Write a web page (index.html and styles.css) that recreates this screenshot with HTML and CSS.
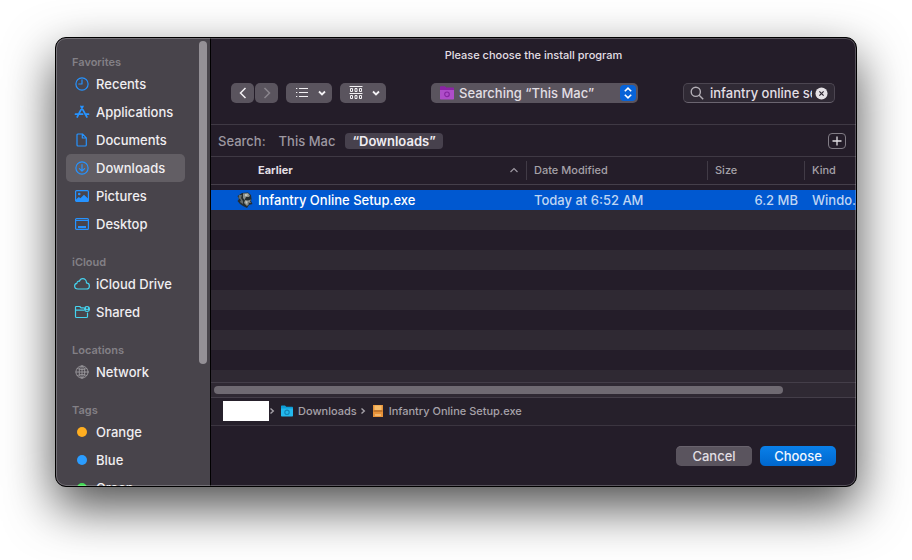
FILE: index.html
```html
<!DOCTYPE html>
<html lang="en">
<head>
<meta charset="utf-8">
<title>Please choose the install program</title>
<link rel="stylesheet" href="styles.css">
</head>
<body>
<div class="window" role="dialog" aria-labelledby="title">
  <aside class="sidebar">
    <nav class="places">
      <h2>Favorites</h2>
      <a href="#"><svg class="icon" viewBox="0 0 16 16"><circle cx="8" cy="8" r="6.1"/><path d="M8 3.8V8H4.8"/></svg>Recents</a>
      <a href="#"><svg class="icon thick" viewBox="0 0 16 16"><path d="M8.9 2.3 5.2 9M7 2.3 12.9 13M1.5 10.2H8.6M11.2 10.2H14.5M4.2 11.2 3.2 13"/></svg>Applications</a>
      <a href="#"><svg class="icon" viewBox="0 0 16 16"><path d="M4 2H8.5L12.3 5.8V13a1 1 0 0 1-1 1H4a1 1 0 0 1-1-1V3a1 1 0 0 1 1-1ZM8.3 2V6H12.3"/></svg>Documents</a>
      <a href="#" class="current" aria-current="page"><svg class="icon" viewBox="0 0 16 16"><circle cx="8" cy="8" r="6.1"/><path d="M8 4.6V11M5.4 8.6 8 11.1 10.6 8.6"/></svg>Downloads</a>
      <a href="#"><svg class="icon" viewBox="0 0 16 16"><rect x="1.6" y="2.6" width="12.8" height="10.8" rx="1"/><circle class="fill" cx="5.2" cy="6" r="1.3"/><path class="fill" d="M2 11.6 4.8 9 6.4 10.2 10 6.8 14 10.6V13.4H2Z"/></svg>Pictures</a>
      <a href="#"><svg class="icon" viewBox="0 0 16 16"><rect x="1.6" y="2.6" width="12.8" height="10.8" rx="1"/><path d="M1.6 4.5H14.4"/><path class="fill" d="M4 10H12V12H4Z"/></svg>Desktop</a>
      <h2>iCloud</h2>
      <a href="#"><svg class="icon cyan" viewBox="0 0 16 16"><path d="M4 13C1.9 13 .6 11.8 .6 10.1 .6 8.6 1.6 7.5 2.900 7.300 3 5.700 4.300 4.900 5.400 5.300 6 3.500 7.200 2.600 8.700 2.600 10.900 2.600 12.500 4.500 12.500 6.900 14.200 7.100 15.400 8.200 15.400 9.900 15.400 11.700 14.100 13 12.400 13Z"/></svg>iCloud Drive</a>
      <a href="#"><svg class="icon cyan" viewBox="0 0 16 16"><path d="M9.500 3.900H7L5.800 2.500H2.300Q1.500 2.500 1.500 3.300V12.400Q1.500 13.500 2.700 13.500H12.300Q13.500 13.500 13.500 12.400V9M1.500 6.200H9.500"/><circle class="fill" cx="13" cy="5" r="3"/><circle class="hole" cx="13" cy="4" r="1"/><path class="hole" d="M11.300 6.800Q13 4.700 14.700 6.800Z"/></svg>Shared</a>
      <h2>Locations</h2>
      <a href="#"><svg class="icon gray" viewBox="0 0 16 16"><circle cx="8" cy="8" r="6.1"/><ellipse cx="8" cy="8" rx="2.8" ry="6.1"/><path d="M8 2V14M2 8H14M3.300 4.700Q8 6.800 12.700 4.700M3.300 11.300Q8 9.200 12.700 11.300"/></svg>Network</a>
      <h2>Tags</h2>
      <a href="#"><span class="tag orange"></span>Orange</a>
      <a href="#"><span class="tag blue"></span>Blue</a>
      <a href="#"><span class="tag green"></span>Green</a>
    </nav>
    <div class="vscroll"></div>
  </aside>

  <main class="content">
    <h1 id="title">Please choose the install program</h1>
    <div class="toolbar">
      <div class="history">
        <button type="button" class="tool nav" aria-label="Back"><svg viewBox="0 0 10 14"><path d="M7.500 2 2.500 7 7.500 12"/></svg></button>
        <button type="button" class="tool nav" aria-label="Forward" disabled><svg viewBox="0 0 10 14"><path d="M2.500 2 7.500 7 2.500 12"/></svg></button>
      </div>
      <button type="button" class="tool view" aria-label="List view">
        <svg class="glyph" viewBox="0 0 14 14"><path d="M4 2.500H13M4 6.500H13M4 10.500H13M1 2.500H2.300M1 6.500H2.300M1 10.500H2.300"/></svg>
        <svg class="chevron" viewBox="0 0 8 8"><path d="M1 2.500 4 5.500 7 2.500"/></svg>
      </button>
      <button type="button" class="tool view" aria-label="Group items">
        <svg class="glyph" viewBox="0 0 14 14"><path d="M.5 .5H13.500M.5 7.500H13.500M1.500 2.500H3.500V5.500H1.500ZM6 2.500H8V5.500H6ZM10.500 2.500H12.500V5.500H10.500ZM1.500 9.500H3.500V12.500H1.500ZM6 9.500H8V12.500H6ZM10.500 9.500H12.500V12.500H10.500Z"/></svg>
        <svg class="chevron" viewBox="0 0 8 8"><path d="M1 2.500 4 5.500 7 2.500"/></svg>
      </button>
      <label class="location">
        <svg class="folder" viewBox="0 0 16 16"><path fill="#8b23a5" d="M1 2Q1 1.300 1.700 1.300H6L7.300 2.500H14.300Q15 2.500 15 3.200V13.500H1Z"/><path fill="#ae4dc9" d="M1 5H15V13.800Q15 14.500 14.300 14.500H1.700Q1 14.500 1 13.800Z"/><circle cx="8" cy="9.300" r="2.300" stroke="#8625a2" stroke-width="1.200"/></svg>
        <select aria-label="Location"><option>Searching “This Mac”</option></select>
        <span class="stepper"><svg viewBox="0 0 16 16"><path d="M4.800 6.300 8 3.200 11.200 6.300M4.800 9.700 8 12.800 11.200 9.700"/></svg></span>
      </label>
      <div class="search">
        <svg class="lens" viewBox="0 0 14 14"><circle cx="5.800" cy="5.800" r="4.600"/><path d="M9.200 9.200 13.200 13.200"/></svg>
        <input type="text" aria-label="Search" value="infantry online setup">
        <button type="button" class="clear" aria-label="Clear search"><svg viewBox="0 0 14 14"><circle cx="7" cy="7" r="6.500"/><path d="M4.700 4.700 9.300 9.300M9.300 4.700 4.700 9.300"/></svg></button>
      </div>
    </div>

    <div class="scope">
      <span class="scope-label">Search:</span>
      <button type="button">This Mac</button>
      <button type="button" class="active">“Downloads”</button>
      <button type="button" class="add" aria-label="Add rule"><svg viewBox="0 0 12 12"><path d="M6 1.500V10.500M1.500 6H10.500"/></svg></button>
    </div>

    <div class="files">
      <table>
        <colgroup><col><col class="col-date"><col class="col-size"><col class="col-kind"></colgroup>
        <thead>
          <tr>
            <th class="name"><div>Earlier<svg viewBox="0 0 10 8"><path d="M1.500 6 5 2.500 8.500 6"/></svg></div></th>
            <th>Date Modified</th><th>Size</th><th>Kind</th>
          </tr>
        </thead>
        <tbody>
          <tr>
            <td class="name"><div><svg class="app" viewBox="0 0 16 16"><path fill="#252c2f" d="M5 1 11 .5 14 3 14.500 7 14 9 15.500 12 12 13 10 16 6 14 3 12 .5 9 2 7 .5 4Z"/><path fill="#8b8f8c" d="M6 1.500 11 1 13 3.500 12 5 9 5 7.500 8 6 6ZM8 8 11 8.500 14 7.500 13 9.500 14 11 11 10.500 12 12 10 14 7 11Z"/><path fill="#c6c7bd" d="M8 2 11 2.500 10 4 8 4.200ZM8.500 9 10.500 9.500 10 12 8.500 10.500Z"/><path fill="#656b69" d="M2 3 5 3 4 6 6 9 6 12 3 10 4 8 1.500 6Z"/></svg>Infantry Online Setup.exe</div></td>
            <td>Today at 6:52 AM</td><td class="size">6.2 MB</td><td class="kind">Windo..</td>
          </tr>
        </tbody>
      </table>
      <div class="stripes"></div>
    </div>
    <div class="hscroll"><div></div></div>

    <div class="path">
      <span class="redacted"></span>
      <svg class="sep" viewBox="0 0 6 8"><path d="M1.500 1.500 4.300 4 1.500 6.500"/></svg>
      <svg class="small" viewBox="0 0 14 14"><path fill="#0e9ed8" d="M1 2.300Q1 1.500 1.800 1.500H5L6.300 2.700H12.200Q13 2.700 13 3.500V11H1Z"/><path fill="#23b8ed" d="M1 4.500H13V11.700Q13 12.500 12.200 12.500H1.800Q1 12.500 1 11.700Z"/><circle cx="7" cy="8.300" r="2.200" stroke="#1286b8" stroke-width="1.200"/></svg>
      <span>Downloads</span>
      <svg class="sep second" viewBox="0 0 6 8"><path d="M1.500 1.500 4.300 4 1.500 6.500"/></svg>
      <svg class="small" viewBox="0 0 14 14"><path fill="#e8933a" d="M2 1H12V13H2Z"/><path fill="#f6bd6b" d="M3.500 1.500H10.500V6H3.500Z"/><path fill="#9c5a20" d="M2.500 6.500H11.500V7.500H2.500Z"/><path fill="#ffd79a" d="M4 10.500H10V11.500H4Z"/></svg>
      <span>Infantry Online Setup.exe</span>
    </div>
    <div class="actions">
      <button type="button">Cancel</button>
      <button type="button" class="primary">Choose</button>
    </div>
  </main>
</div>
</body>
</html>
```
FILE: styles.css
```css
* { box-sizing: border-box; }

body {
  margin: 0;
  height: 100vh;
  padding: 37px 55px 73px;
  background: #fff;
  color: #e2dfe4;
  font: 500 13px/16px Inter, "Liberation Sans", sans-serif;
  overflow: hidden;
}

button, input, select { font: inherit; color: inherit; margin: 0; padding: 0; border: 0; }
svg { fill: none; stroke: currentColor; flex: none; display: block; }
svg [fill] { stroke: none; }

.window {
  position: relative;
  display: flex;
  height: 100%;
  border: 1px solid #000;
  border-radius: 11px;
  background: #241d29;
  overflow: hidden;
  box-shadow: 0 20px 50px rgba(0, 0, 0, .7);
}
.window::after {
  content: "";
  position: absolute;
  inset: 0;
  border: 1px solid rgba(255, 255, 255, .24);
  border-radius: 10px;
  pointer-events: none;
}

/* Sidebar */
.sidebar {
  display: flex;
  flex: none;
  width: 155px;
  background: #48444b;
  border-right: 1px solid #000;
}
.places { flex: 1; padding: 0 14px 0 10px; }
.places h2 {
  margin: 16px 0 0;
  padding-left: 6px;
  font-size: 11px;
  line-height: 16px;
  font-weight: 600;
  color: #838086;
}
.places a {
  display: flex;
  align-items: center;
  gap: 6px;
  height: 28px;
  padding-left: 8px;
  border-radius: 5px;
  color: #f0eef1;
  text-decoration: none;
  white-space: nowrap;
}
.places .current { background: #625e64; }
.icon { width: 16px; height: 16px; color: #2693ff; stroke-width: 1.2; stroke-linecap: round; stroke-linejoin: round; }
.icon.thick { stroke-width: 1.7; }
.icon.cyan { color: #45d3ef; }
.icon.gray { color: #9b989d; stroke-width: .9; }
.icon .fill { fill: currentColor; stroke: none; }
.icon .hole { fill: #48444b; stroke: none; }
.tag { width: 10px; height: 10px; margin: 0 3px; border-radius: 50%; }
.orange { background: #ffae20; }
.blue { background: #2b9dff; }
.green { background: #43dc55; }
.vscroll { width: 8px; height: 72%; margin: 3px 3px 0 0; border-radius: 4px; background: #949096; }

/* Content */
.content { display: flex; flex-direction: column; flex: 1; min-width: 0; }
h1 { margin: 9px 0 20px; font-size: 11px; line-height: 16px; font-weight: 500; text-align: center; }
.toolbar { display: flex; align-items: center; gap: 8px; height: 20px; margin: 0 21px 21px 20px; }
.history { display: flex; gap: 1px; }
.tool {
  display: flex;
  align-items: center;
  justify-content: center;
  height: 20px;
  border-radius: 5px;
  background: #5a545e;
  color: #f2f0f3;
}
.nav { width: 23px; }
.nav svg { width: 10px; height: 14px; stroke-width: 1.5; }
.nav:disabled { color: #8a858d; }
.view { width: 46px; justify-content: space-between; padding: 0 6px 0 9px; }
.glyph { width: 14px; height: 14px; stroke-width: 1; }
.chevron { width: 8px; height: 8px; stroke-width: 1.8; }
.location {
  display: flex;
  align-items: center;
  flex: none;
  width: 207px;
  height: 20px;
  margin: 0 auto;
  padding: 0 2px 0 8px;
  border-radius: 5px;
  background: #5a545e;
}
.folder { width: 16px; height: 16px; }
.location select { flex: 1; min-width: 0; margin-left: 4px; appearance: none; background: none; outline: 0; }
.stepper { width: 16px; height: 16px; border-radius: 4px; background: #0763d8; color: #fff; }
.stepper svg { stroke-width: 1.6; }
.search {
  display: flex;
  align-items: center;
  flex: none;
  width: 152px;
  height: 20px;
  padding: 0 6px;
  border: 1px solid #4c4651;
  border-bottom-color: #6b6570;
  border-radius: 5px;
  background: #302a35;
}
.lens { width: 14px; height: 14px; color: #b3afb6; stroke-width: 1.4; }
.search input { flex: 1; min-width: 0; margin: 0 3px 0 6px; background: none; outline: 0; }
.clear { background: none; color: #e5e2e6; }
.clear svg { width: 13px; height: 13px; }
.clear circle { fill: currentColor; stroke: none; }
.clear path { stroke: #302a35; stroke-width: 1.3; }

.scope {
  display: flex;
  align-items: center;
  gap: 3px;
  height: 33px;
  padding: 0 10px 0 7px;
  border: solid #3f3944;
  border-width: 1px 0;
  color: #9d98a1;
}
.scope-label { margin-right: 3px; }
.scope button { height: 16px; padding: 0 7px; border-radius: 4px; background: none; line-height: 16px; }
.scope .active { background: #47414d; color: #f0edf2; font-weight: 600; }
.scope .add { width: 18px; height: 16px; margin-left: auto; padding: 0 2px; border: 1px solid #817c85; color: #e2dfe4; }
.add svg { width: 12px; height: 12px; stroke-width: 1.3; }

.files { display: flex; flex-direction: column; flex: 1; min-height: 0; }
table { width: 100%; table-layout: fixed; border-collapse: separate; border-spacing: 0; }
.col-date { width: 181px; }
.col-size { width: 97px; }
.col-kind { width: 52px; }
th, td { padding: 0 0 0 8px; text-align: left; white-space: nowrap; overflow: hidden; }
th {
  height: 28px;
  padding-bottom: 2px;
  border-bottom: 1px solid #453f4a;
  background: linear-gradient(#413b46, #413b46) no-repeat 0 4px / 1px 19px;
  color: #a5a1a8;
  font-size: 11px;
  font-weight: 500;
}
th.name { background: none; padding: 0 7px 2px 47px; color: #e2dfe4; font-weight: 700; }
th.name div { display: flex; align-items: center; justify-content: space-between; }
th svg { width: 10px; height: 8px; color: #9d98a1; stroke-width: 1.2; }
td { height: 25px; border-top: 5px solid #241d29; background: #0058d0; color: #bfd5f3; }
td.name { padding-left: 26px; color: #fff; }
td.name div { display: flex; align-items: center; gap: 5px; }
td.size { padding: 0 6px 0 0; text-align: right; }
.app { width: 16px; height: 16px; }
.stripes { flex: 1; background: repeating-linear-gradient(#2f2933 0 20px, #241d29 20px 40px); }
.hscroll { height: 16px; padding: 3px; border: solid #443e49; border-width: 1px 0; background: #2f2933; }
.hscroll div { width: 89%; height: 8px; border-radius: 4px; background: #6f6a72; }

.path {
  display: flex;
  align-items: center;
  height: 28px;
  padding: 0 0 1px 12px;
  border-bottom: 1px solid #3b3540;
  background: #26202b;
  color: #a6a2a9;
  font-size: 11px;
}
.redacted { width: 46px; height: 20px; background: #fff; }
.sep { width: 6px; height: 8px; margin-right: 5px; stroke-width: 1.4; }
.sep.second { margin: 0 5px 0 3px; }
.small { width: 14px; height: 14px; margin-right: 4px; }
.actions { display: flex; justify-content: flex-end; gap: 8px; padding: 20px 20px 20px 0; }
.actions button { width: 76px; height: 20px; border-radius: 5px; background: #5a545e; box-shadow: inset 0 1px #69636d; }
.actions .primary { background: linear-gradient(#0a80e9, #0067cd); color: #f0f6ff; box-shadow: none; }
```
